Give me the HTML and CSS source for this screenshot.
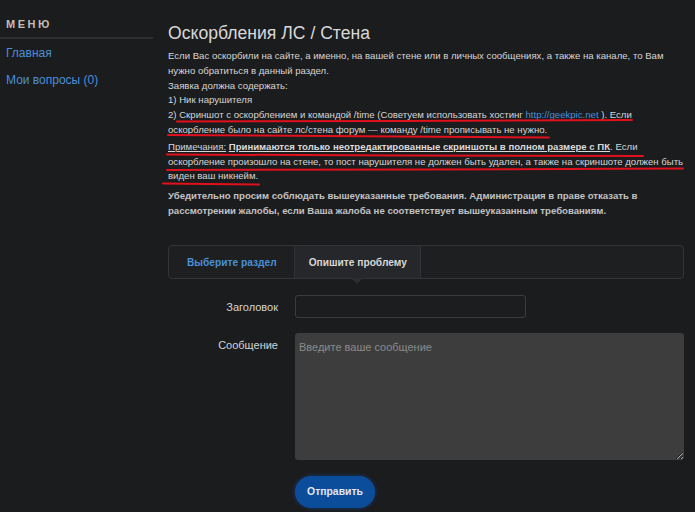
FILE: index.html
```html
<!DOCTYPE html>
<html lang="ru">
<head>
<meta charset="utf-8">
<title>Оскорбления ЛС / Стена</title>
<link rel="stylesheet" href="styles.css">
</head>
<body>
<div class="page">
  <aside class="sidebar">
    <div class="menu-title">МЕНЮ</div>
    <nav class="menu">
      <a class="menu-link" href="#">Главная</a>
      <a class="menu-link" href="#">Мои вопросы (0)</a>
    </nav>
  </aside>
  <main class="main">
    <h1 class="title">Оскорбления ЛС / Стена</h1>
    <div class="rules">
      <p class="rule">Если Вас оскорбили на сайте, а именно, на вашей стене или в личных сообщениях, а также на канале, то Вам нужно обратиться в данный раздел.<br>Заявка должна содержать:<br>1) Ник нарушителя<br>2) Скриншот с оскорблением и командой /time (Советуем использовать хостинг <a class="link" href="#">http://geekpic.net</a> ). Если оскорбление было на сайте лс/стена форум — команду /time прописывать не нужно.</p>
      <p class="rule rule-note"><u>Примечания:</u> <b class="em"><u>Принимаются только неотредактированные скриншоты в полном размере с ПК</u></b>. Если оскорбление произошло на стене, то пост нарушителя не должен быть удален, а также на скриншоте должен быть виден ваш никнейм.</p>
      <p class="rule rule-strong">Убедительно просим соблюдать вышеуказанные требования. Администрация в праве отказать в рассмотрении жалобы, если Ваша жалоба не соответствует вышеуказанным требованиям.</p>
    </div>
    <div class="tabs">
      <div class="tab tab-link">Выберите раздел</div>
      <div class="tab tab-active">Опишите проблему</div>
    </div>
    <form class="form">
      <label class="label label-center" for="subject">Заголовок</label>
      <input class="input" id="subject" type="text">
      <label class="label label-top" for="message">Сообщение</label>
      <textarea class="textarea" id="message" placeholder="Введите ваше сообщение"></textarea>
      <div class="actions">
        <button class="button" type="button">Отправить</button>
      </div>
    </form>
  </main>
  <svg class="marks" width="695" height="512" viewBox="0 0 695 512" aria-hidden="true">
    <path d="M177 121.5 L400 121 L632 120" />
    <path d="M168 135 L400 136.5 L549 137.5" />
    <path d="M167 154.5 L400 155.5 L643 156" />
    <path d="M167 170 L420 169.5 L683 168.5" />
    <path d="M163 183.5 L259 184.5" />
  </svg>
</div>
</body>
</html>
```

FILE: styles.css
```css
* { box-sizing: border-box; }

html, body {
  margin: 0;
  padding: 0;
  background: #1b1c1e;
}

body {
  font-family: "Liberation Sans", Arial, sans-serif;
  color: #c9c9c9;
}

.page {
  position: relative;
  display: flex;
  gap: 15px;
  width: 695px;
  height: 512px;
  overflow: hidden;
}

.sidebar {
  width: 153px;
  flex: none;
}

.menu-title {
  padding: 17px 6px 6px;
  font-size: 11px;
  line-height: 14px;
  font-weight: bold;
  letter-spacing: 2.5px;
  color: #c4bcb2;
  border-bottom: 2px solid #2e2f31;
}

.menu {
  display: flex;
  flex-direction: column;
  gap: 13px;
  padding: 7px 6px 0;
}

.menu-link {
  font-size: 12px;
  line-height: 14px;
  color: #4a8fd8;
  text-decoration: none;
}

.main {
  width: 520px;
  flex: none;
  padding-top: 22px;
}

.title {
  margin: 0;
  font-size: 17.6px;
  line-height: 22px;
  font-weight: normal;
  color: #d8d8d8;
}

.rules {
  margin-top: 5px;
}

.rule {
  margin: 0;
  font-size: 9.6px;
  line-height: 14.8px;
  color: #d6d6d6;
}

.rule-note {
  margin-top: 2px;
}

.rule-strong {
  margin-top: 5px;
  font-weight: bold;
  color: #c2c2c2;
}

.link {
  color: #4a8fd8;
  text-decoration: none;
}

.em {
  color: #dadada;
}

.tabs {
  position: relative;
  display: flex;
  width: 516px;
  height: 34px;
  margin-top: 26px;
  border: 1px solid #323437;
  border-radius: 4px;
  background: #1d1f21;
}

.tab {
  padding: 1px 17px 0 18px;
  font-size: 10.2px;
  line-height: 31px;
  font-weight: bold;
  border-right: 1px solid #323437;
}

.tab-link {
  color: #4a8fd8;
}

.tab-active {
  position: relative;
  padding: 1px 13px 0 14px;
  color: #d8d8d8;
  background: #25272a;
}

.tab-active::after {
  content: "";
  position: absolute;
  left: 50%;
  top: 32px;
  margin-left: -6px;
  border-left: 6px solid transparent;
  border-right: 6px solid transparent;
  border-top: 6px solid #2b2d30;
}

.form {
  display: grid;
  grid-template-columns: 110px 389px;
  column-gap: 17px;
  row-gap: 15px;
  margin-top: 16px;
}

.label {
  font-size: 11px;
  line-height: 14px;
  color: #d4d4d4;
  text-align: right;
}

.label-center {
  align-self: center;
  padding-top: 2px;
}

.label-top {
  align-self: start;
  padding-top: 5px;
}

.input {
  width: 231px;
  height: 23px;
  margin: 0;
  padding: 2px 6px;
  border: 1px solid #3a3c3f;
  border-radius: 3px;
  background: #1c1d1f;
  color: #ddd;
  font: 11px "Liberation Sans", Arial, sans-serif;
}

.textarea {
  display: block;
  width: 389px;
  height: 127px;
  margin: 0;
  padding: 7px 4px;
  border: none;
  border-radius: 3px;
  background: #3d3d3d;
  color: #ddd;
  font: 11px/14px "Liberation Sans", Arial, sans-serif;
  resize: vertical;
}

.textarea::placeholder {
  color: #8b8b8b;
}

.actions {
  grid-column: 2;
  padding-top: 1px;
}

.button {
  width: 80px;
  height: 32px;
  margin: 0;
  padding: 0;
  border: none;
  border-radius: 16px;
  background: #0b4d9b;
  box-shadow: 0 0 4px rgba(20, 90, 190, 0.55);
  color: #e2e6ee;
  font: bold 10.4px "Liberation Sans", Arial, sans-serif;
}

.marks {
  position: absolute;
  left: 0;
  top: 0;
  pointer-events: none;
}

.marks path {
  fill: none;
  stroke: #e0101c;
  stroke-width: 2;
  stroke-linecap: round;
}
```
